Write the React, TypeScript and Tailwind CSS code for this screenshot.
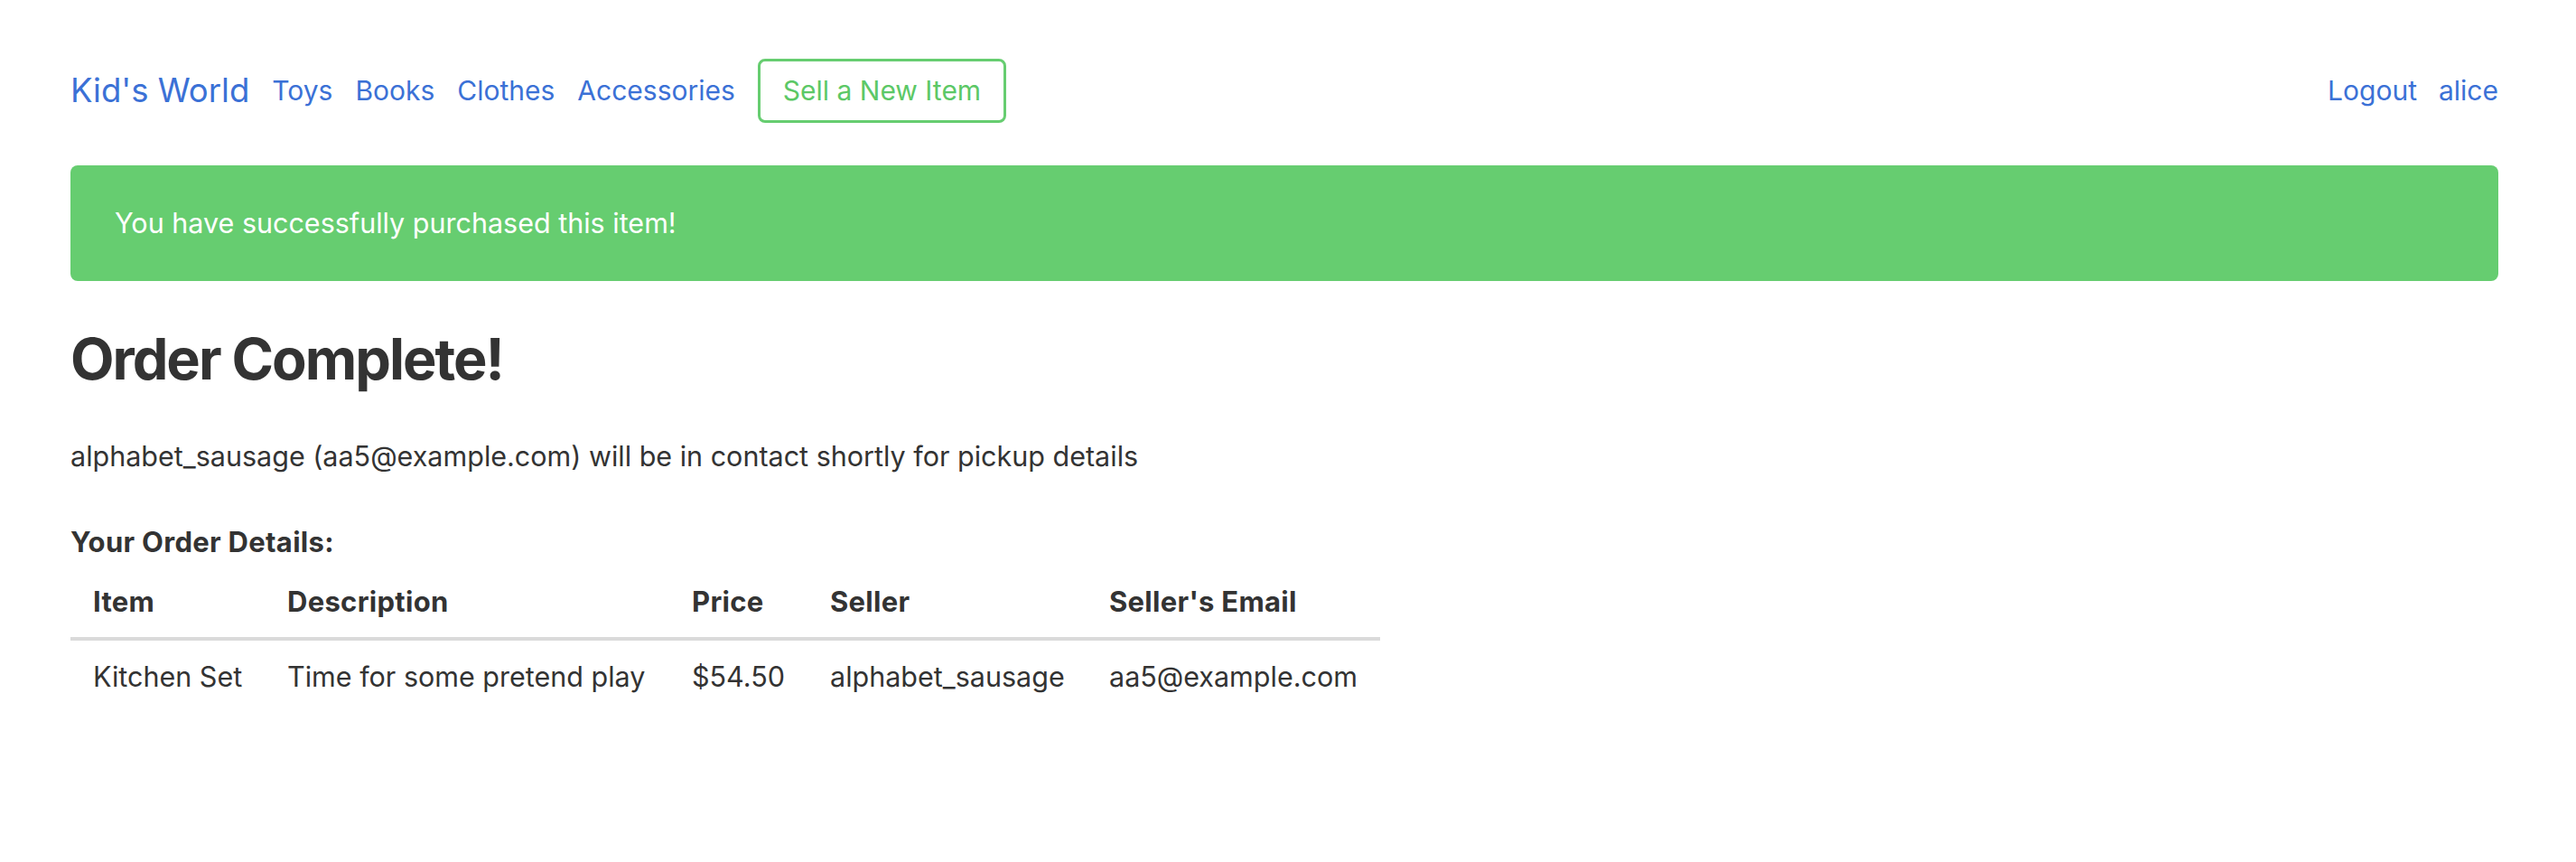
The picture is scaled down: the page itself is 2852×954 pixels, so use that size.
import React from 'react';

const navLinks = ['Toys', 'Books', 'Clothes', 'Accessories'];

const order = {
  item: 'Kitchen Set',
  description: 'Time for some pretend play',
  price: '$54.50',
  seller: 'alphabet_sausage',
  email: 'aa5@example.com',
};

export default function App() {
  return (
    <div className="min-h-screen bg-white pl-[78px] pr-[86px] text-[#333333] font-['Inter','Noto_Sans',sans-serif]">
      {/* navbar */}
      <header className="flex items-center justify-between pt-[65px]">
        <div className="flex items-center">
          <a className="text-[36.5px] leading-none text-[#3b71d6] mr-[25px]">Kid's World</a>
          <nav className="flex items-center gap-[25px] text-[30px] text-[#3b71d6]">
            {navLinks.map((l) => (
              <a key={l}>{l}</a>
            ))}
            <button className="h-[71px] px-[25px] rounded-[8px] border-[3px] border-[#66cd70] text-[#5cc866] text-[30px]">
              Sell a New Item
            </button>
          </nav>
        </div>
        <div className="flex items-center gap-[24px] text-[30px] text-[#3b71d6]">
          <a>Logout</a>
          <a>alice</a>
        </div>
      </header>

      {/* alert */}
      <div className="mt-[47px] h-[128px] flex items-center px-[49px] rounded-[8px] bg-[#66cd70] text-white text-[30.5px]">
        You have successfully purchased this item!
      </div>

      <h1 className="mt-[47px] text-[63px] leading-[78px] font-bold tracking-[-2px]">Order Complete!</h1>

      <p className="mt-[46px] text-[30.5px] leading-[45px]">
        alphabet_sausage (aa5@example.com) will be in contact shortly for pickup details
      </p>

      <h3 className="mt-[50px] text-[31px] leading-[45px] font-bold tracking-[0.3px]">Your Order Details:</h3>

      <table className="mt-[4px] w-[1450px] table-fixed text-[30.5px] leading-[45px]">
        <thead>
          <tr className="border-b-[4px] border-[#dadada] text-left text-[31px] tracking-[0.3px]">
            <th className="w-[215px] px-[25px] py-[17px] font-bold">Item</th>
            <th className="w-[448px] px-[25px] py-[17px] font-bold">Description</th>
            <th className="w-[153px] px-[25px] py-[17px] font-bold">Price</th>
            <th className="w-[309px] px-[25px] py-[17px] font-bold">Seller</th>
            <th className="w-[325px] px-[25px] py-[17px] font-bold whitespace-nowrap">Seller's Email</th>
          </tr>
        </thead>
        <tbody>
          <tr>
            <td className="px-[25px] py-[17px] whitespace-nowrap">{order.item}</td>
            <td className="px-[25px] py-[17px] whitespace-nowrap">{order.description}</td>
            <td className="px-[25px] py-[17px] whitespace-nowrap">{order.price}</td>
            <td className="px-[25px] py-[17px] whitespace-nowrap">{order.seller}</td>
            <td className="px-[25px] py-[17px] whitespace-nowrap">{order.email}</td>
          </tr>
        </tbody>
      </table>
    </div>
  );
}
